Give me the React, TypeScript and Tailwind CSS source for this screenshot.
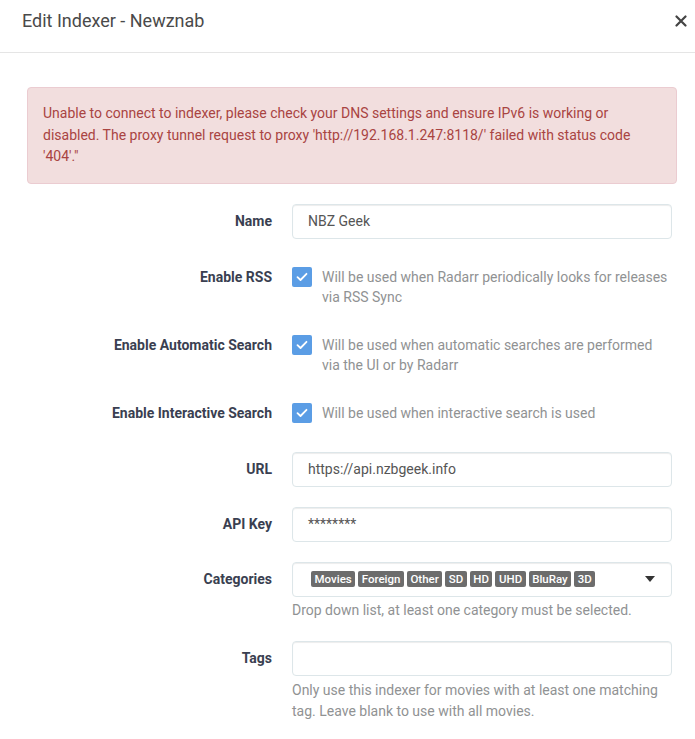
import React from "react";

const labelCls =
  "w-[265px] shrink-0 pr-5 text-right text-[14px] font-bold text-[#3a3f51]";

function TextRow({ label, value }: { label: string; value: string }) {
  return (
    <div className="flex mb-5">
      <div className={labelCls + " leading-[35px]"}>{label}</div>
      <div className="w-[380px] h-[35px] rounded border border-[#dde6e9] shadow-[inset_0_1px_1px_rgba(0,0,0,0.075)] px-[15px] flex items-center text-[14px] text-[#555]">
        {value}
      </div>
    </div>
  );
}

function CheckRow({ label, help }: { label: string; help: string }) {
  return (
    <div className="flex mb-5 min-h-[37px]">
      <div className={labelCls + " leading-[36px]"}>{label}</div>
      <div className="w-[380px] flex pt-[8px]">
        <div className="w-5 h-5 shrink-0 rounded-[2px] bg-[#5b9de5] flex items-center justify-center">
          <svg width="12" height="10" viewBox="0 0 12 10" fill="none">
            <path d="M1.5 5.2 L4.5 8 L10.5 1.8" stroke="white" strokeWidth="1.8" strokeLinecap="round" strokeLinejoin="round" />
          </svg>
        </div>
        <div className="ml-[10px] text-[14px] leading-[20px] text-[#909293]">{help}</div>
      </div>
    </div>
  );
}

const cats = ["Movies", "Foreign", "Other", "SD", "HD", "UHD", "BluRay", "3D"];

export default function App() {
  return (
    <div className="w-[695px] h-[739px] bg-white overflow-hidden" style={{ fontFamily: "Roboto, 'Noto Sans', sans-serif" }}>
      <div className="h-[53px] border-b border-[#e5e5e5] flex items-center justify-between pl-[22px] pr-[7px]">
        <div className="text-[18px] text-[#4a4a4a] -mt-[11px]">Edit Indexer - Newznab</div>
        <svg width="12" height="12" viewBox="0 0 12 12" className="-mt-[11px] mr-[1px]">
          <path d="M1.5 1.5 L10.5 10.5 M10.5 1.5 L1.5 10.5" stroke="#444" strokeWidth="2.2" strokeLinecap="round" />
        </svg>
      </div>
      <div className="pl-[27px] pr-[18px] pt-[34px]">
        <div className="rounded border border-[#ebccd1] bg-[#f2dede] text-[#a94442] text-[14px] leading-[21.5px] px-[15px] py-[15px] mb-5">
          Unable to connect to indexer, please check your DNS settings and ensure IPv6 is working or disabled. The proxy tunnel request to proxy 'http://192.168.1.247:8118/' failed with status code '404'."
        </div>
        <TextRow label="Name" value="NBZ Geek" />
        <CheckRow label="Enable RSS" help="Will be used when Radarr periodically looks for releases via RSS Sync" />
        <CheckRow label="Enable Automatic Search" help="Will be used when automatic searches are performed via the UI or by Radarr" />
        <CheckRow label="Enable Interactive Search" help="Will be used when interactive search is used" />
        <TextRow label="URL" value="https://api.nzbgeek.info" />
        <TextRow label="API Key" value="********" />
        <div className="flex mb-5">
          <div className={labelCls + " leading-[35px]"}>Categories</div>
          <div className="w-[380px]">
            <div className="h-[35px] rounded border border-[#dde6e9] shadow-[inset_0_1px_1px_rgba(0,0,0,0.075)] pl-[18px] pr-[16px] flex items-center justify-between">
              <div className="flex gap-[3px]">
                {cats.map((c) => (
                  <span key={c} className="bg-[#6c6c6c] text-white text-[11.5px] font-medium leading-[16px] px-[3.5px] rounded-[2px]">
                    {c}
                  </span>
                ))}
              </div>
              <svg width="10" height="6" viewBox="0 0 10 6">
                <path d="M0 0 H10 L5 6 Z" fill="#333" />
              </svg>
            </div>
            <div className="text-[14px] leading-[21px] text-[#909293] mt-[3px]">
              Drop down list, at least one category must be selected.
            </div>
          </div>
        </div>
        <div className="flex mb-5">
          <div className={labelCls + " leading-[35px]"}>Tags</div>
          <div className="w-[380px]">
            <div className="h-[35px] rounded border border-[#dde6e9] shadow-[inset_0_1px_1px_rgba(0,0,0,0.075)]" />
            <div className="text-[14px] leading-[21px] text-[#909293] mt-[4px]">
              Only use this indexer for movies with at least one matching tag. Leave blank to use with all movies.
            </div>
          </div>
        </div>
      </div>
    </div>
  );
}
